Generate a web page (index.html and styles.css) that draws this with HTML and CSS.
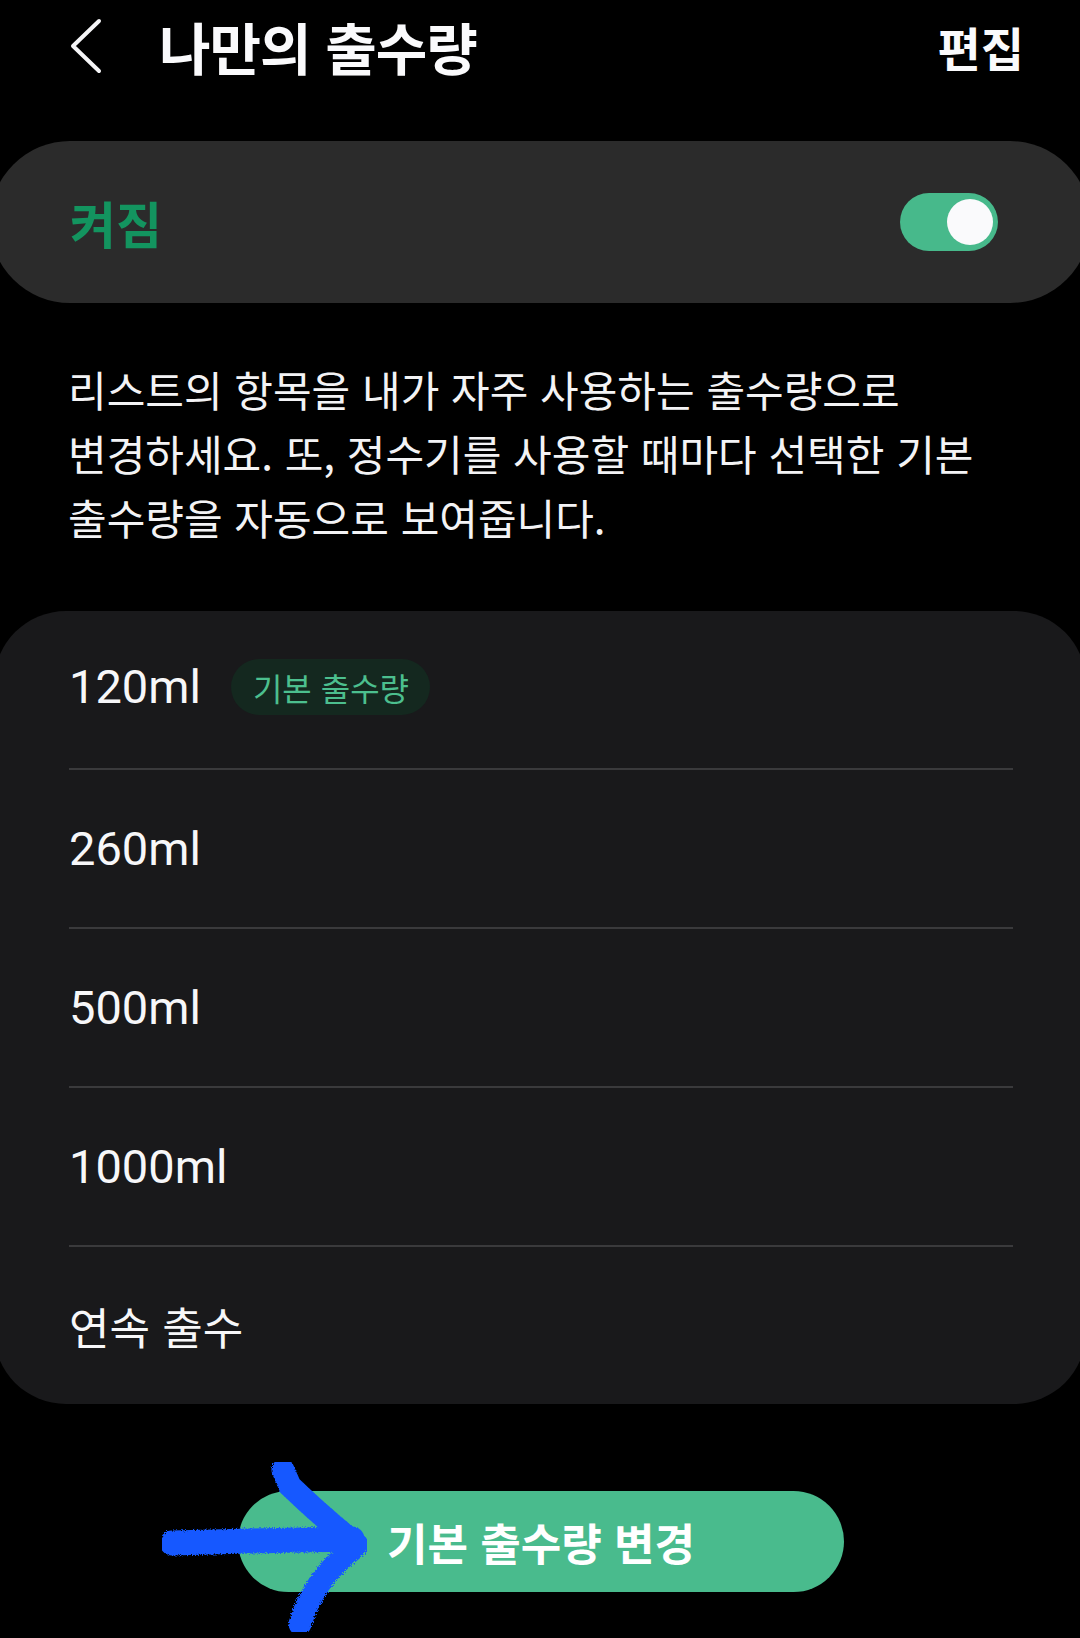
FILE: index.html
```html
<!DOCTYPE html>
<html lang="ko">
<head>
<meta charset="utf-8">
<title>나만의 출수량</title>
<link rel="stylesheet" href="styles.css">
</head>
<body>
<div class="page">
  <header class="topbar">
    <svg class="back" width="34" height="56" viewBox="0 0 34 56" aria-hidden="true">
      <polyline points="29,3 3,28 29,53" fill="none" stroke="#f5f5f7" stroke-width="4" stroke-linecap="round" stroke-linejoin="round"/>
    </svg>
    <h1 class="title">나만의 출수량</h1>
    <span class="edit">편집</span>
  </header>

  <section class="switch-card">
    <span class="switch-label">켜짐</span>
    <span class="toggle"><span class="knob"></span></span>
  </section>

  <p class="desc">리스트의 항목을 내가 자주 사용하는 출수량으로<br>변경하세요. 또, 정수기를 사용할 때마다 선택한 기본<br>출수량을 자동으로 보여줍니다.</p>

  <section class="list-card">
    <div class="row first"><div class="row-inner"><span class="amount">120ml</span><span class="badge">기본 출수량</span></div></div>
    <div class="row"><div class="row-inner line"><span class="amount">260ml</span></div></div>
    <div class="row"><div class="row-inner line"><span class="amount">500ml</span></div></div>
    <div class="row"><div class="row-inner line"><span class="amount">1000ml</span></div></div>
    <div class="row"><div class="row-inner line"><span class="amount ko">연속 출수</span></div></div>
  </section>

  <div class="btn-wrap">
    <button class="primary">기본 출수량 변경</button>
  </div>

  <svg class="scribble" width="1080" height="1638" viewBox="0 0 1080 1638" aria-hidden="true">
    <defs>
      <filter id="rough" x="-5%" y="-5%" width="110%" height="110%">
        <feTurbulence type="fractalNoise" baseFrequency="0.9" numOctaves="2" seed="3" result="n"/>
        <feDisplacementMap in="SourceGraphic" in2="n" scale="5"/>
      </filter>
    </defs>
    <g filter="url(#rough)" fill="none" stroke="#1459ff" stroke-linecap="round">
      <path d="M172 1543 L250 1541 L352 1539" stroke-width="25"/>
      <path d="M283 1470 L290 1486 Q320 1515 357 1545" stroke-width="23"/>
      <path d="M352 1550 Q313 1580 300 1624" stroke-width="23"/>
    </g>
  </svg>
</div>
</body>
</html>
```

FILE: styles.css
```css
html, body {
  margin: 0;
  padding: 0;
  background: #000;
}

body {
  width: 1080px;
  height: 1638px;
  overflow: hidden;
  font-family: "Noto Sans CJK KR", "Noto Sans", sans-serif;
  color: #f5f5f7;
}

.page {
  position: relative;
  width: 1080px;
  height: 1638px;
}

.topbar {
  display: flex;
  align-items: center;
  height: 92px;
  padding: 0 56px 0 70px;
}

.back {
  display: block;
  flex: none;
}

.title {
  margin: 0 0 0 55px;
  font-size: 56px;
  font-weight: 700;
  letter-spacing: -1px;
  line-height: 1;
  flex: 1;
  color: #fafafc;
}

.edit {
  font-size: 47px;
  font-weight: 700;
  line-height: 1;
  color: #fafafc;
}

.switch-card {
  display: flex;
  align-items: center;
  justify-content: space-between;
  margin: 49px -10px 0 -10px;
  height: 162px;
  padding: 0 92px 0 80px;
  border-radius: 80px;
  background: #2b2b2b;
}

.switch-label {
  font-size: 50px;
  font-weight: 700;
  color: #13945f;
  line-height: 1;
}

.toggle {
  position: relative;
  display: block;
  width: 98px;
  height: 58px;
  border-radius: 29px;
  background: #47b98b;
}

.knob {
  position: absolute;
  right: 5px;
  top: 6px;
  width: 46px;
  height: 46px;
  border-radius: 50%;
  background: #fafafc;
}

.desc {
  margin: 54px 0 0 0;
  padding: 0 30px 0 68px;
  font-size: 42px;
  line-height: 64px;
  color: #f3f3f5;
  letter-spacing: 0;
}

.list-card {
  margin: 62px -6px 0 -6px;
  border-radius: 72px;
  background: #19191b;
  display: flex;
  flex-direction: column;
}

.row {
  padding: 0 73px 0 75px;
}

.row-inner {
  display: flex;
  align-items: center;
  height: 157px;
}

.row.first .row-inner {
  height: 151px;
  padding-bottom: 6px;
}

.row-inner.line {
  border-top: 2px solid #3a3a3c;
}

.amount {
  font-family: Roboto, "Noto Sans CJK KR", sans-serif;
  font-size: 47px;
  color: #f7f7f9;
  line-height: 1;
}

.amount.ko {
  font-family: "Noto Sans CJK KR", sans-serif;
  font-size: 44px;
}

.badge {
  margin-left: 30px;
  height: 56px;
  padding: 0 21px 0 22px;
  border-radius: 28px;
  background: #14281f;
  color: #4cbf8e;
  font-size: 32px;
  display: flex;
  align-items: center;
  line-height: 1;
}

.btn-wrap {
  display: flex;
  justify-content: center;
  margin-top: 87px;
}

.primary {
  width: 606px;
  height: 101px;
  border: none;
  border-radius: 51px;
  background: #49bb8d;
  color: #ffffff;
  font-family: "Noto Sans CJK KR", sans-serif;
  font-size: 44px;
  font-weight: 700;
  padding: 0;
  margin-left: 2px;
}

.scribble {
  position: absolute;
  left: 0;
  top: 0;
  pointer-events: none;
}
```
